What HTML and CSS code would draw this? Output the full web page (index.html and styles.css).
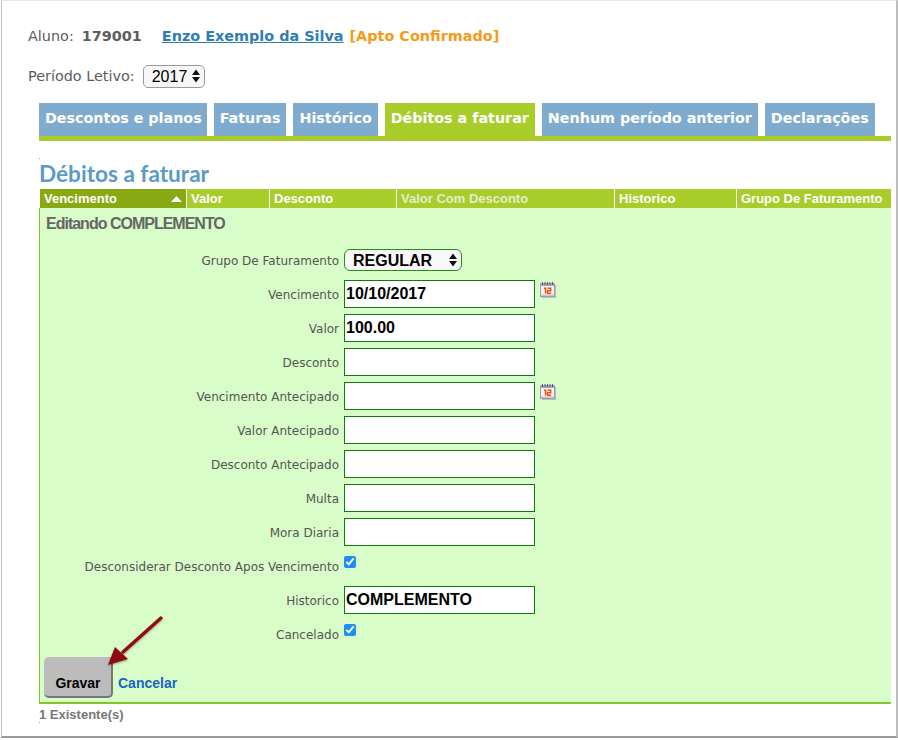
FILE: index.html
```html
<!DOCTYPE html>
<html lang="pt">
<head>
<meta charset="utf-8">
<title>Débitos a faturar</title>
<link rel="stylesheet" href="styles.css">
</head>
<body>
<svg width="0" height="0" class="defs">
  <symbol id="cal" viewBox="0 0 16 16">
    <rect x="2" y="3" width="14" height="13" fill="#7f7f6f" opacity=".45"/>
    <rect x="0.500" y="1.500" width="14" height="13" fill="#f4f2f0" stroke="#a09db6" stroke-width="1"/>
    <rect x="1" y="1" width="13" height="3" fill="#a8a5c0"/>
    <path d="M2.500 0v3M5 0v3M7.500 0v3M10 0v3M12.500 0v3" stroke="#5c5a70" stroke-width="1"/>
    <path d="M4 6.200h1.600v5.300" fill="none" stroke="#f0500c" stroke-width="1.500"/>
    <path d="M7.500 6.200h3.200v2.500h-3.200v2.600h3.600" fill="none" stroke="#f0500c" stroke-width="1.400"/>
    <rect x="1" y="12.500" width="13" height="1.500" fill="#c6c4d8"/>
  </symbol>
</svg>
<div class="window">
  <p class="student">
    <span class="k">Aluno:</span> <b class="id">179001</b>
    <a class="name" href="#">Enzo Exemplo da Silva</a>
    <b class="status">[Apto Confirmado]</b>
  </p>
  <div class="period">
    <label class="k" for="ano">Período Letivo:</label>
    <span class="sel-wrap">
      <select id="ano" class="year"><option>2017</option></select>
      <svg class="updown" width="8" height="14" viewBox="0 0 8 14"><path d="M4 0.500L8 6H0zM4 13.500L0 8H8z" fill="#111"/></svg>
    </span>
  </div>
  <nav class="tabs">
    <a class="tab" href="#">Descontos e planos</a>
    <a class="tab" href="#">Faturas</a>
    <a class="tab" href="#">Histórico</a>
    <a class="tab on" href="#">Débitos a faturar</a>
    <a class="tab" href="#">Nenhum período anterior</a>
    <a class="tab" href="#">Declarações</a>
  </nav>
  <i class="speck"></i>
  <h1 class="title">Débitos a faturar</h1>
  <div class="thead">
    <div class="th sorted">Vencimento<svg class="caret" width="11" height="6" viewBox="0 0 11 6"><path d="M5.500 0L11 6H0z" fill="#fff"/></svg></div>
    <div class="th">Valor</div>
    <div class="th">Desconto</div>
    <div class="th dim">Valor Com Desconto</div>
    <div class="th">Historico</div>
    <div class="th">Grupo De Faturamento</div>
  </div>
  <section class="panel">
    <h2 class="edit">Editando COMPLEMENTO</h2>
    <div class="form">
      <label class="lb">Grupo De Faturamento</label>
      <div class="cell">
        <span class="sel-wrap">
          <select class="group"><option>REGULAR</option></select>
          <svg class="updown" width="8" height="14" viewBox="0 0 8 14"><path d="M4 0.500L8 6H0zM4 13.500L0 8H8z" fill="#111"/></svg>
        </span>
      </div>
      <label class="lb">Vencimento</label>
      <div class="cell"><input class="inp" value="10/10/2017"><svg class="cal" width="16" height="16"><use href="#cal"/></svg></div>
      <label class="lb">Valor</label>
      <div class="cell"><input class="inp" value="100.00"></div>
      <label class="lb">Desconto</label>
      <div class="cell"><input class="inp"></div>
      <label class="lb">Vencimento Antecipado</label>
      <div class="cell"><input class="inp"><svg class="cal" width="16" height="16"><use href="#cal"/></svg></div>
      <label class="lb">Valor Antecipado</label>
      <div class="cell"><input class="inp"></div>
      <label class="lb">Desconto Antecipado</label>
      <div class="cell"><input class="inp"></div>
      <label class="lb">Multa</label>
      <div class="cell"><input class="inp"></div>
      <label class="lb">Mora Diaria</label>
      <div class="cell"><input class="inp"></div>
      <label class="lb">Desconsiderar Desconto Apos Vencimento</label>
      <div class="cell"><input class="chk" type="checkbox" checked></div>
      <label class="lb">Historico</label>
      <div class="cell"><input class="inp" value="COMPLEMENTO"></div>
      <label class="lb">Cancelado</label>
      <div class="cell"><input class="chk" type="checkbox" checked></div>
    </div>
    <div class="actions">
      <button class="save" type="button">Gravar</button>
      <a class="cancel" href="#">Cancelar</a>
    </div>
    <svg class="arrow" width="64" height="60" viewBox="0 0 64 60">
      <path d="M59 5L21 39" stroke="#8c0c12" stroke-width="3.200" stroke-linecap="round"/>
      <path d="M6 52L13 34L26 46z" fill="#8c0c12"/>
    </svg>
  </section>
  <p class="count">1 Existente(s)</p>
  <i class="speck"></i>
</div>
</body>
</html>
```
FILE: styles.css
```css
html, body { margin: 0; padding: 0; background: #fff; }
body { width: 898px; height: 740px; overflow: hidden; font-family: "DejaVu Sans", Verdana, sans-serif; color: #555; }
.defs { position: absolute; }
.window {
  box-sizing: border-box; width: 897px; height: 738px; margin: 0 0 0 1px;
  padding: 0 5px 0 37px; background: #fff;
  border-left: 1px solid #c4c4c4; border-top: 1px solid #e6e6e6;
  border-right: 2px solid #bdbdbd; border-bottom: 2px solid #9a9a9a;
  position: relative;
}
.student { margin: 25px 0 0 -11px; height: 20px; line-height: 20px; font-size: 14.4px; white-space: nowrap; display: flex; }
.k { color: #5c5c5c; }
.id { color: #5e5e5e; margin-left: 8px; }
.name { color: #2f7db5; font-weight: bold; margin-left: 20px; }
.status { color: #f79a16; margin-left: 6px; }
.period { margin: 18px 0 0 -11px; height: 24px; display: flex; align-items: center; gap: 8px; font-size: 14.4px; }
.sel-wrap { position: relative; display: inline-block; }
.year {
  appearance: none; box-sizing: border-box; width: 62px; height: 23px; padding: 0 0 0 8px;
  border: 1px solid #9a9a9a; border-radius: 5px; background: #f6f6f6; color: #000;
  font: 16px "Liberation Sans", Arial, sans-serif;
}
.updown { position: absolute; right: 5px; top: 4px; }
.tabs { display: flex; gap: 7px; margin-top: 15px; border-bottom: 5px solid #a8cd2a; height: 33px; width: 852px; }
.tab {
  height: 33px; line-height: 31px; padding: 0 6px; background: #7facce; color: #fff;
  font-size: 14.3px; font-weight: bold; text-decoration: none; white-space: nowrap;
}
.tab:first-child { padding-right: 5px; }
.tab.on { background: #a8cd2a; }
.speck { display: block; width: 1px; height: 1px; background: #7facce; margin-top: 17px; }
.title { margin: 1px 0 0; height: 29px; font: bold 22.6px/27px Lato, "DejaVu Sans", sans-serif; color: #5b9ac6; }
.thead {
  display: grid; grid-template-columns: 146px 82px 126px 217px 121px 154px; column-gap: 1px;
  width: 851px; margin: 0 0 0 1px; height: 19px; background: #fff; border-bottom: 0;
}
.th {
  position: relative; background: #a8cd2a; color: #fff; padding-left: 4px;
  font: bold 13px/19px "Liberation Sans", Arial, sans-serif; white-space: nowrap;
}
.th.sorted { background: #89a912; }
.th.dim { color: #e6eccb; }
.caret { position: absolute; right: 4px; top: 7px; }
.panel {
  position: relative; box-sizing: border-box; width: 852px; height: 496px;
  background: #d9fdc8; border-left: 1px solid #7ec82a; border-bottom: 2px solid #7ec82a;
}
.edit { margin: 0; padding: 6px 0 0 6px; height: 29px; box-sizing: border-box; font: bold 16px/19px "Liberation Sans", Arial, sans-serif; letter-spacing: -1px; color: #666; }
.form { display: grid; grid-template-columns: 299px 1fr; column-gap: 5px; grid-auto-rows: 34px; margin-top: 6px; }
.lb { align-self: center; text-align: right; font-size: 12px; line-height: 14px; color: #555; white-space: nowrap; padding-top: 1px; }
.cell { display: flex; align-items: center; gap: 5px; height: 34px; }
.inp {
  box-sizing: border-box; width: 191px; height: 28px; padding: 0 1px; margin: 0;
  border: 1px solid #0c7a0c; background: #fff; color: #000; outline: none;
  font: bold 16px "Liberation Sans", Arial, sans-serif;
}
.group {
  appearance: none; box-sizing: border-box; width: 118px; height: 22px; padding: 0 0 0 8px;
  border: 1px solid #2a8a1a; border-radius: 6px; background: #f8f8f8; color: #000;
  font: bold 16px "Liberation Sans", Arial, sans-serif;
}
.cal { margin-top: -8px; }
.chk { width: 12px; height: 12px; margin: -8px 0 0; accent-color: #1f8cf8; }
.actions { display: flex; align-items: flex-end; gap: 5px; margin: 6px 0 0 4px; }
.save {
  box-sizing: border-box; width: 69px; height: 41px; padding: 12px 0 0 1px; border: 0; border-radius: 5px;
  border-right: 2px solid #777; border-bottom: 2px solid #777;
  background: #bcbcbc; color: #000; font: bold 14px "Liberation Sans", Arial, sans-serif;
}
.cancel { color: #1a63c9; font: bold 14px/16px "Liberation Sans", Arial, sans-serif; text-decoration: none; padding-bottom: 7px; }
.arrow { position: absolute; left: 62px; top: 405px; filter: drop-shadow(0 1px 1px rgba(60, 20, 20, .45)); }
.count { margin: 4px 0 0; height: 14px; font: bold 13px/14px "Liberation Sans", Arial, sans-serif; color: #777; }
.count + .speck { margin-top: 0; }
```
